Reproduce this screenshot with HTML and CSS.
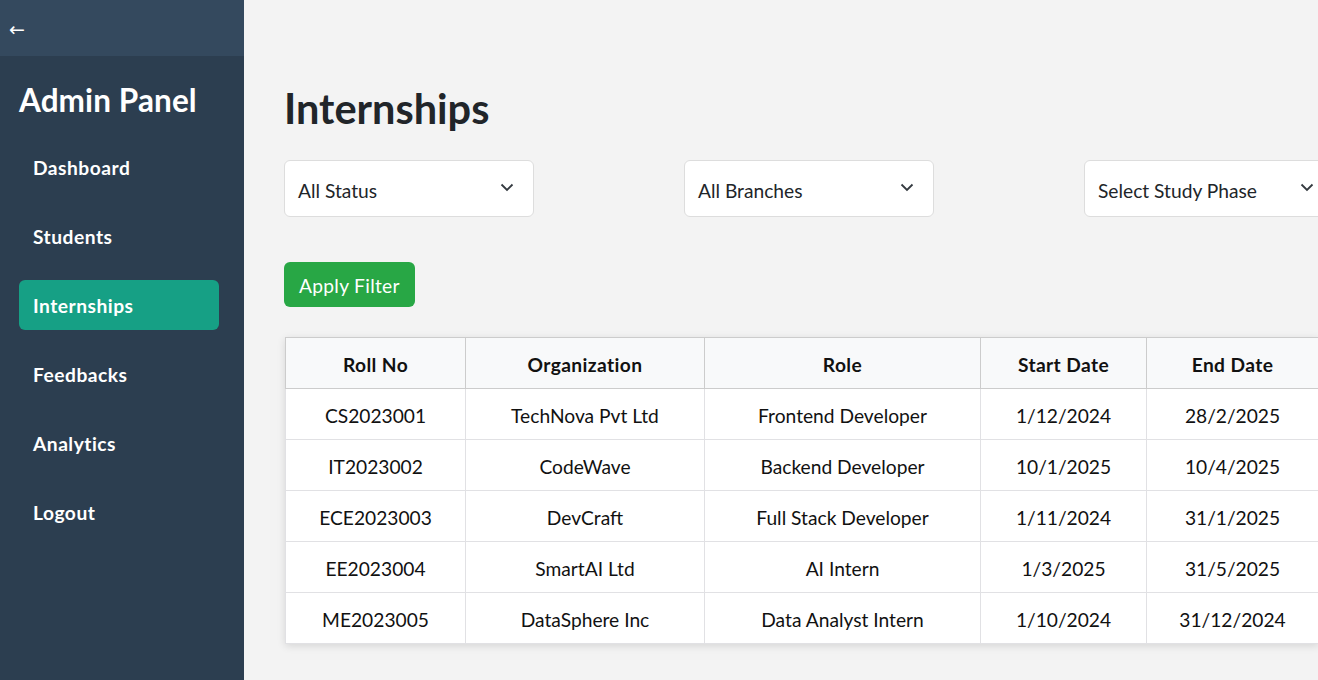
FILE: index.html
```html
<!DOCTYPE html>
<html lang="en">
<head>
<meta charset="utf-8">
<title>Admin Panel - Internships</title>
<link rel="stylesheet" href="styles.css">
</head>
<body>
<div class="layout">
  <aside class="sidebar">
    <div class="topbar"><button class="back">←</button></div>
    <div class="side-body">
      <h2 class="brand">Admin Panel</h2>
      <nav class="nav">
        <a class="nav-item">Dashboard</a>
        <a class="nav-item">Students</a>
        <a class="nav-item active">Internships</a>
        <a class="nav-item">Feedbacks</a>
        <a class="nav-item">Analytics</a>
        <a class="nav-item">Logout</a>
      </nav>
    </div>
  </aside>
  <main class="main">
    <h1 class="title">Internships</h1>
    <div class="filters">
      <div class="select"><span>All Status</span><svg class="chev" width="14" height="9" viewBox="0 0 14 9"><path d="M1.5 1.5 L7 7 L12.5 1.5" fill="none" stroke="#343a40" stroke-width="1.8"/></svg></div>
      <div class="select"><span>All Branches</span><svg class="chev" width="14" height="9" viewBox="0 0 14 9"><path d="M1.5 1.5 L7 7 L12.5 1.5" fill="none" stroke="#343a40" stroke-width="1.8"/></svg></div>
      <div class="select"><span>Select Study Phase</span><svg class="chev" width="14" height="9" viewBox="0 0 14 9"><path d="M1.5 1.5 L7 7 L12.5 1.5" fill="none" stroke="#343a40" stroke-width="1.8"/></svg></div>
    </div>
    <button class="apply">Apply Filter</button>
    <div class="table-wrap">
      <table class="table">
        <colgroup>
          <col class="c1"><col class="c2"><col class="c3"><col class="c4"><col class="c5">
        </colgroup>
        <thead>
          <tr><th>Roll No</th><th>Organization</th><th>Role</th><th>Start Date</th><th>End Date</th></tr>
        </thead>
        <tbody>
          <tr><td>CS2023001</td><td>TechNova Pvt Ltd</td><td>Frontend Developer</td><td>1/12/2024</td><td>28/2/2025</td></tr>
          <tr><td>IT2023002</td><td>CodeWave</td><td>Backend Developer</td><td>10/1/2025</td><td>10/4/2025</td></tr>
          <tr><td>ECE2023003</td><td>DevCraft</td><td>Full Stack Developer</td><td>1/11/2024</td><td>31/1/2025</td></tr>
          <tr><td>EE2023004</td><td>SmartAI Ltd</td><td>AI Intern</td><td>1/3/2025</td><td>31/5/2025</td></tr>
          <tr><td>ME2023005</td><td>DataSphere Inc</td><td>Data Analyst Intern</td><td>1/10/2024</td><td>31/12/2024</td></tr>
        </tbody>
      </table>
    </div>
  </main>
</div>
</body>
</html>
```
FILE: styles.css
```css
* { box-sizing: border-box; }
html, body { margin: 0; padding: 0; height: 100%; overflow: hidden; }
body {
  font-family: Lato, "Noto Sans", sans-serif;
  background: #f3f3f3;
  color: #111;
}
.layout { display: flex; height: 680px; width: 1318px; overflow: hidden; }
.sidebar {
  width: 244px;
  flex: 0 0 244px;
  background: #2c3e50;
  color: #fff;
  display: flex;
  flex-direction: column;
}
.topbar {
  height: 56px;
  background: #34495e;
  display: flex;
  align-items: center;
  padding-left: 7px;
}
.back {
  background: none;
  border: 0;
  color: #fff;
  font-size: 19px;
  font-family: "DejaVu Sans", sans-serif;
  padding: 0 2px;
  line-height: 20px;
  margin-top: 2px;
}
.side-body { padding: 23px 25px 0 19px; }
.brand {
  margin: 0 0 21px 0;
  font-size: 31.5px;
  line-height: 42px;
  font-weight: 700;
  letter-spacing: 0.1px;
}
.nav { display: flex; flex-direction: column; gap: 19px; }
.nav-item {
  height: 50px;
  display: flex;
  align-items: center;
  padding: 1px 14px 0 14px;
  border-radius: 6px;
  font-size: 19.2px;
  font-weight: 700;
  color: #fff;
  letter-spacing: 0.5px;
}
.nav-item.active { background: #16a085; }
.main {
  flex: 1 1 auto;
  padding: 82px 0 0 40px;
  min-width: 0;
}
.title {
  margin: 0;
  font-size: 41.5px;
  line-height: 52px;
  font-weight: 700;
  color: #212529;
}
.filters {
  margin-top: 26px;
  display: flex;
  gap: 150px;
  width: 1200px;
}
.select {
  flex: 0 0 250px;
  height: 57px;
  background: #fff;
  border: 1px solid #ddd;
  border-radius: 6px;
  display: flex;
  align-items: center;
  justify-content: space-between;
  padding: 0 19px 0 13px;
  font-size: 19.2px;
  color: #212529;
}
.select span { padding-top: 3px; }
.chev { margin-top: -2px; }
.apply {
  margin-top: 45px;
  height: 45px;
  padding: 1px 15px 0 15px;
  background: #28a745;
  color: #fff;
  border: 0;
  border-radius: 6px;
  font-family: inherit;
  font-size: 19.2px;
  letter-spacing: 0.3px;
}
.table-wrap { margin-top: 30px; width: 1100px; }
.table {
  border-collapse: collapse;
  background: #fff;
  box-shadow: 0 2px 8px rgba(0,0,0,0.12);
  font-size: 19.2px;
  table-layout: fixed;
  width: 1033px;
  margin-left: 1px;
}
.c1 { width: 180px; } .c2 { width: 239px; } .c3 { width: 276px; }
.c4 { width: 166px; } .c5 { width: 172px; }
.table th, .table td {
  text-align: center;
  height: 51px;
  padding: 2px 8px 0 8px;
  border: 1px solid #e1e1e4;
  color: #111;
}
.table th {
  background: #f8f9fa;
  font-weight: 700;
  border-color: #ccc;
  letter-spacing: 0.4px;
}
```
